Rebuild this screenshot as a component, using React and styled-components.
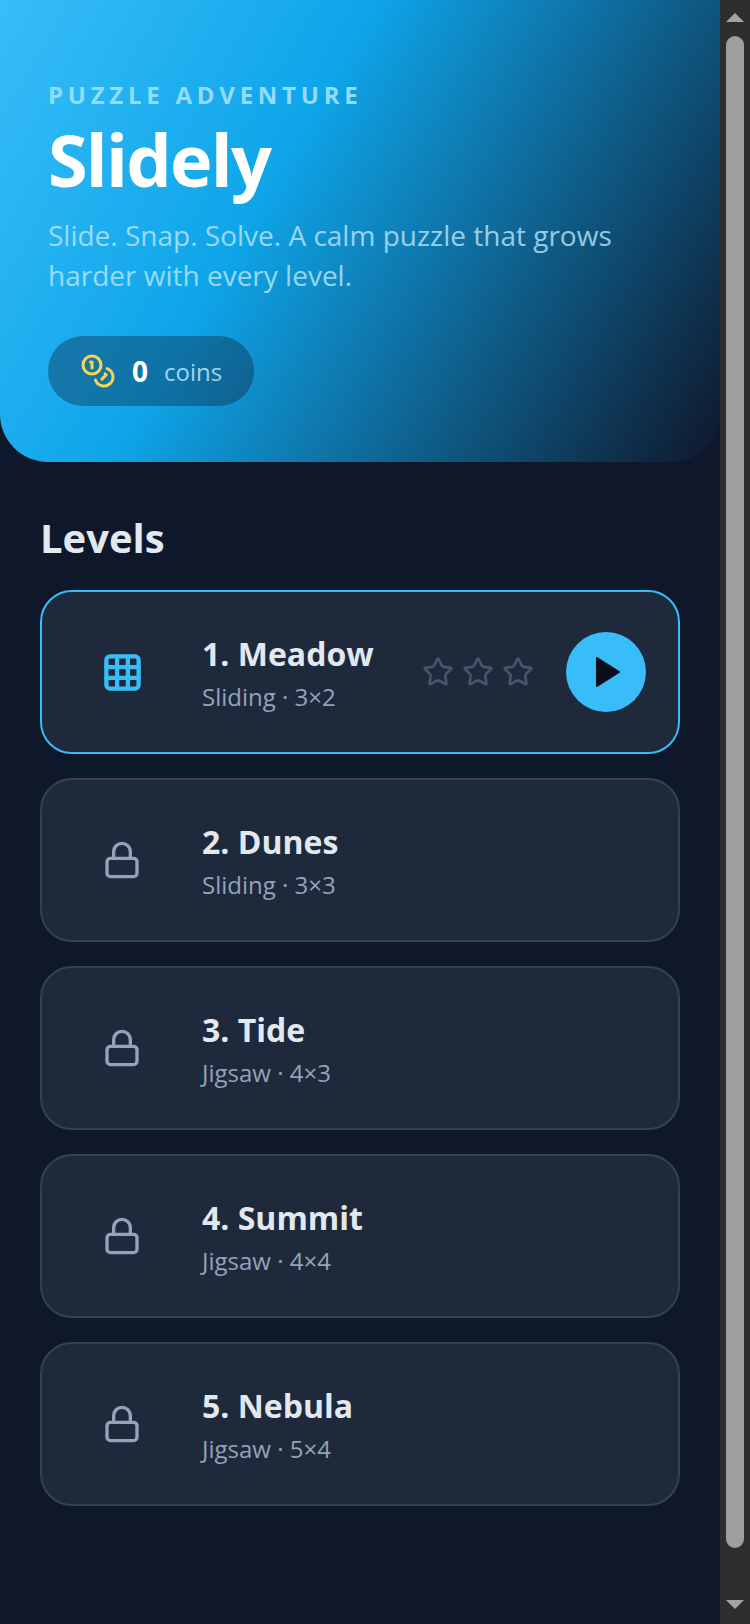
import React from "react";
import styled, { createGlobalStyle } from "styled-components";
import { Coins, Grid3x3, Lock, Star } from "lucide-react";

const GlobalStyle = createGlobalStyle`
  html, body {
    margin: 0;
    height: 100%;
    overflow: hidden;
    background: #0f172a;
    font-family: "Open Sans", "Noto Sans", sans-serif;
  }
`;

const Shell = styled.div`
  display: flex;
  height: 1624px;
`;

const Page = styled.div`
  flex: 1;
  min-width: 0;
  overflow: hidden;
  background: #0f172a;
`;

const ScrollTrack = styled.aside`
  display: flex;
  flex-direction: column;
  box-sizing: border-box;
  flex: none;
  width: 30px;
  padding: 13px 6px 15px;
  background: #2e2e2e;
`;

const ScrollArrow = styled.div`
  flex: none;
  width: 0;
  height: 0;
  border-left: 9px solid transparent;
  border-right: 9px solid transparent;
  ${(p) => (p.$down ? "border-top: 9px solid #a3a3a3;" : "border-bottom: 9px solid #a3a3a3;")}
`;

const ScrollThumb = styled.div`
  flex: 1;
  margin: 14px 0 52px;
  border-radius: 9px;
  background: #9e9e9e;
`;

const Hero = styled.header`
  padding: 80px 48px 56px;
  border-radius: 0 0 48px 48px;
  background: linear-gradient(120deg, #38bdf8 0%, #0ea5e9 38%, #0f172a 100%);
`;

const Eyebrow = styled.div`
  font-size: 24px;
  line-height: 30px;
  font-weight: 700;
  letter-spacing: 4.75px;
  color: #94dcfc;
`;

const Title = styled.h1`
  margin: 8px 0 0;
  font-size: 72px;
  line-height: 82px;
  font-weight: 700;
  letter-spacing: -1.8px;
  color: #fff;
`;

const Tagline = styled.p`
  margin: 15px 0 0;
  font-size: 28px;
  line-height: 40px;
  color: #bae6fd;
  opacity: 0.8;
`;

const CoinChip = styled.div`
  display: inline-flex;
  align-items: center;
  gap: 16px;
  margin-top: 41px;
  padding: 0 32px;
  height: 70px;
  border-radius: 35px;
  background: rgba(15, 23, 42, 0.35);
  color: #fcd34d;
`;

const CoinCount = styled.span`
  font-size: 28px;
  font-weight: 700;
  color: #fff;
`;

const CoinLabel = styled.span`
  font-size: 24px;
  color: #bae6fd;
  opacity: 0.85;
`;

const Levels = styled.main`
  padding: 48px 40px 0;
`;

const Heading = styled.h2`
  margin: 0 0 24px;
  font-size: 40px;
  line-height: 56px;
  font-weight: 700;
  color: #e2e8f0;
`;

const LevelList = styled.div`
  display: flex;
  flex-direction: column;
  gap: 24px;
`;

const Card = styled.div`
  display: flex;
  align-items: center;
  gap: 32px;
  padding: 32px;
  border: 2px solid ${(p) => (p.$active ? "#38bdf8" : "#334155")};
  border-radius: 32px;
  background: #1e293b;
`;

const IconBox = styled.div`
  display: flex;
  align-items: center;
  justify-content: center;
  flex: none;
  width: 96px;
  height: 96px;
  color: ${(p) => (p.$active ? "#38bdf8" : "#94a3b8")};
`;

const Info = styled.div`
  flex: 1;
  min-width: 0;
  padding-top: 3px;
`;

const Name = styled.div`
  font-size: 32px;
  line-height: 44px;
  font-weight: 700;
  color: #e2e8f0;
`;

const Meta = styled.div`
  margin-top: 3px;
  font-size: 24px;
  line-height: 36px;
  color: #94a3b8;
`;

const Stars = styled.div`
  display: flex;
  gap: 8px;
  color: #475569;
`;

const PlayButton = styled.button`
  display: flex;
  align-items: center;
  justify-content: center;
  flex: none;
  width: 80px;
  height: 80px;
  padding: 0;
  border: none;
  border-radius: 50%;
  background: #38bdf8;
  color: #0a0f1c;
`;

const levels = [
  { name: "1. Meadow", meta: "Sliding · 3×2", active: true },
  { name: "2. Dunes", meta: "Sliding · 3×3" },
  { name: "3. Tide", meta: "Jigsaw · 4×3" },
  { name: "4. Summit", meta: "Jigsaw · 4×4" },
  { name: "5. Nebula", meta: "Jigsaw · 5×4" },
];

export default function App() {
  return (
    <>
      <GlobalStyle />
      <Shell>
        <Page>
          <Hero>
            <Eyebrow>PUZZLE ADVENTURE</Eyebrow>
            <Title>Slidely</Title>
            <Tagline>Slide. Snap. Solve. A calm puzzle that grows harder with every level.</Tagline>
            <CoinChip>
              <Coins size={36} />
              <CoinCount>0</CoinCount>
              <CoinLabel>coins</CoinLabel>
            </CoinChip>
          </Hero>
          <Levels>
            <Heading>Levels</Heading>
            <LevelList>
              {levels.map((level) => (
                <Card key={level.name} $active={level.active}>
                  <IconBox $active={level.active}>
                    {level.active ? <Grid3x3 size={43} strokeWidth={2.4} /> : <Lock size={40} />}
                  </IconBox>
                  <Info>
                    <Name>{level.name}</Name>
                    <Meta>{level.meta}</Meta>
                  </Info>
                  {level.active && (
                    <>
                      <Stars>
                        <Star size={32} />
                        <Star size={32} />
                        <Star size={32} />
                      </Stars>
                      <PlayButton>
                        <svg width="48" height="48" viewBox="0 0 48 48">
                          <path
                            d="M15 10 L37 24 L15 38 Z"
                            fill="currentColor"
                            stroke="currentColor"
                            strokeWidth="2"
                            strokeLinejoin="round"
                          />
                        </svg>
                      </PlayButton>
                    </>
                  )}
                </Card>
              ))}
            </LevelList>
          </Levels>
        </Page>
        <ScrollTrack>
          <ScrollArrow />
          <ScrollThumb />
          <ScrollArrow $down />
        </ScrollTrack>
      </Shell>
    </>
  );
}
